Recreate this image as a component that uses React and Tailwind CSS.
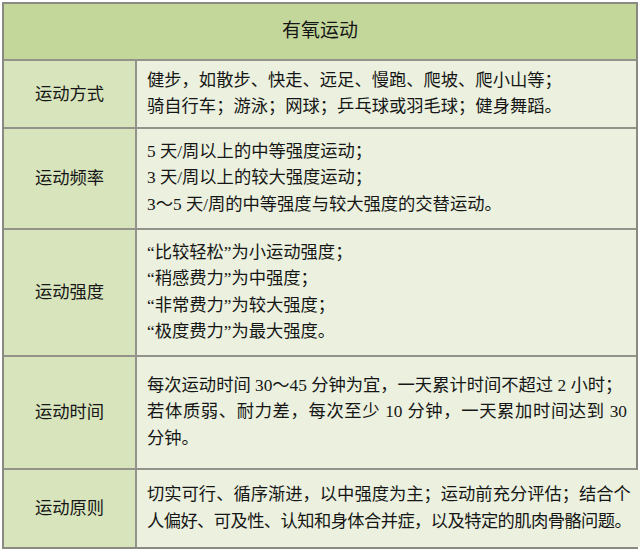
import React from 'react'

const rows = [
  {
    label: "运动方式",
    h: "h-[68px]",
    lines: [
      "健步，如散步、快走、远足、慢跑、爬坡、爬小山等；",
      "骑自行车；游泳；网球；乒乓球或羽毛球；健身舞蹈。",
    ],
  },
  {
    label: "运动频率",
    h: "h-[101px]",
    lines: [
      "5 天/周以上的中等强度运动；",
      "3 天/周以上的较大强度运动；",
      "3～5 天/周的中等强度与较大强度的交替运动。",
    ],
  },
  {
    label: "运动强度",
    h: "h-[127px]",
    lines: [
      "“比较轻松”为小运动强度；",
      "“稍感费力”为中强度；",
      "“非常费力”为较大强度；",
      "“极度费力”为最大强度。",
    ],
  },
  {
    label: "运动时间",
    h: "h-[113px]",
    lines: [
      "每次运动时间 30～45 分钟为宜，一天累计时间不超过 2 小时；",
      "若体质弱、耐力差，每次至少 10 分钟，一天累加时间达到 30",
      "分钟。",
    ],
    justify: [false, true, false],
  },
  {
    label: "运动原则",
    h: "h-[77px]",
    lines: [
      "切实可行、循序渐进，以中强度为主；运动前充分评估；结合个",
      "人偏好、可及性、认知和身体合并症，以及特定的肌肉骨骼问题。",
    ],
    justify: [true, true],
    tight: [false, true],
  },
]

function Row({ row, last }) {
  return (
    <div className={`flex ${row.h} ${last ? "" : "border-b-2 border-[#93938b]"}`}>
      <div className="w-[133px] shrink-0 flex items-center justify-center bg-[#d7e4bc] border-r-2 border-[#93938b] text-[17.3px] pt-[1px]">
        {row.label}
      </div>
      <div className="flex-1 flex flex-col justify-center bg-[#ebf1de] pl-[10px] pr-[9px] text-[17.3px] leading-[26.5px]">
        {row.lines.map((l, i) => {
          const j = row.justify && row.justify[i]
          const t = row.tight && row.tight[i]
          return (
            <div
              key={i}
              className={`whitespace-nowrap ${j ? "text-justify [text-align-last:justify]" : ""} ${t ? "tracking-[-0.85px]" : ""}`}
            >
              {l}
            </div>
          )
        })}
      </div>
    </div>
  )
}

export default function App() {
  return (
    <div
      className="w-[640px] h-[552px] bg-white pt-[2px] pl-[2px] text-[#161616]"
      style={{ fontFamily: '"Liberation Serif", "Noto Sans CJK SC", serif' }}
    >
      <div className="w-[636px] h-[547px] border-2 border-[#8a8a82] flex flex-col">
        <div className="h-[57px] shrink-0 flex items-center justify-center bg-[#c4d79b] border-b-2 border-[#93938b] text-[19px]">
          有氧运动
        </div>
        {rows.map((r, i) => (
          <Row key={r.label} row={r} last={i === rows.length - 1} />
        ))}
      </div>
    </div>
  )
}
